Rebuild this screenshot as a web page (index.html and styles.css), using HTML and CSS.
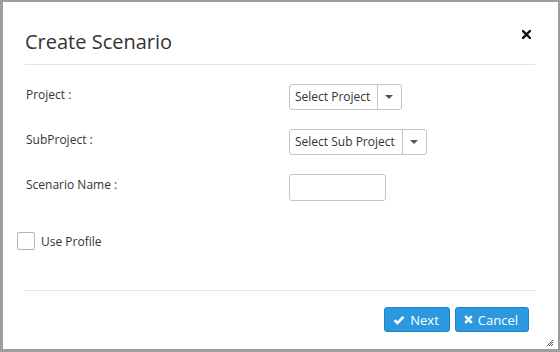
FILE: index.html
```html
<!DOCTYPE html>
<html lang="en">
<head>
    <meta charset="UTF-8">
    <meta name="viewport" content="width=device-width, initial-scale=1.0">
    <title>Create Scenario</title>
    <link rel="stylesheet" href="styles.css">
</head>
<body>
    <div class="dialog">
        <div class="dialog-header">
            <h2 class="dialog-title">Create Scenario</h2>
            <button class="close" aria-label="Close">
                <svg width="9" height="9" viewBox="0 0 9 9"><path d="M1 1L8 8M8 1L1 8" stroke="#111" stroke-width="2.4" stroke-linecap="square"/></svg>
            </button>
        </div>

        <div class="dialog-body">
            <div class="form-grid">
                <label class="field-label">Project :</label>
                <div class="dropdown">
                    <span class="dropdown-text">Select Project</span>
                    <span class="dropdown-caret"></span>
                </div>

                <label class="field-label">SubProject :</label>
                <div class="dropdown">
                    <span class="dropdown-text">Select Sub Project</span>
                    <span class="dropdown-caret"></span>
                </div>

                <label class="field-label" for="scenario-name">Scenario Name :</label>
                <div><input type="text" id="scenario-name" class="text-input"></div>
            </div>

            <label class="check-row">
                <span class="checkbox"></span>
                Use Profile
            </label>
        </div>

        <div class="dialog-footer">
            <button class="btn">
                <svg width="12" height="10" viewBox="0 0 12 10"><path d="M1.5 5.2L4.5 8L10.5 1.8" fill="none" stroke="#fff" stroke-width="2.6"/></svg>
                Next
            </button>
            <button class="btn">
                <svg width="9" height="9" viewBox="0 0 9 9"><path d="M1.2 1.2L7.8 7.8M7.8 1.2L1.2 7.8" stroke="#fff" stroke-width="2.4"/></svg>
                Cancel
            </button>
        </div>

        <!-- resize grip sits over the corner -->
        <svg class="grip" width="8" height="8" viewBox="0 0 8 8">
            <path d="M7 1L1 7M7 3L3 7M7 5L5 7" stroke="#555" stroke-width="1"/>
        </svg>
    </div>
</body>
</html>
```

FILE: styles.css
```css
body {
    margin: 0;
    font-family: "Open Sans", Arial, sans-serif;
    color: #333;
    background: #fff;
}
.dialog {
    position: relative;
    box-sizing: border-box;
    width: 560px;
    height: 352px;
    border: 2px solid #9e9e9e;
    border-left-width: 3px;
    border-bottom-width: 3px;
    background: #fff;
    padding: 0 23px 0 22px;
}
.dialog-header {
    display: flex;
    align-items: flex-start;
    justify-content: space-between;
    padding: 26px 0 8px;
    border-bottom: 1px solid #e5e5e5;
}
.dialog-title {
    margin: 0;
    font-size: 20px;
    font-weight: normal;
    line-height: 28px;
    color: #333;
}
.close {
    border: none;
    background: none;
    padding: 0;
    margin: -1px 4px 0 0;
    cursor: pointer;
}
.dialog-body {
    padding: 19px 0 40px;
}
.form-grid {
    display: grid;
    grid-template-columns: 264px auto;
    row-gap: 19px;
}
.field-label {
    font-size: 12px;
    padding: 2px 0 0 1px;
}
.dropdown {
    display: inline-flex;
    justify-self: start;
    height: 26px;
    box-sizing: border-box;
    border: 1px solid #c5c5c5;
    border-radius: 3px;
    font-size: 12px;
    color: #333;
}
.dropdown-text {
    padding: 0 7px 0 5px;
    line-height: 24px;
    border-right: 1px solid #c5c5c5;
}
.dropdown-caret {
    width: 23px;
    position: relative;
}
.dropdown-caret::after {
    content: "";
    position: absolute;
    left: 7px;
    top: 10px;
    border-left: 4px solid transparent;
    border-right: 4px solid transparent;
    border-top: 4px solid #555;
}
.text-input {
    display: block;
    width: 97px;
    height: 27px;
    box-sizing: border-box;
    border: 1px solid #c5c5c5;
    border-radius: 3px;
    padding: 0 5px;
    font-family: inherit;
    font-size: 12px;
}
.check-row {
    display: flex;
    align-items: center;
    gap: 6px;
    margin: 31px 0 0 -8px;
    font-size: 12px;
}
.checkbox {
    width: 16px;
    height: 16px;
    border: 1px solid #b5b5b5;
    border-radius: 2px;
    background: #fff;
}
.dialog-footer {
    display: flex;
    justify-content: flex-end;
    gap: 5px;
    padding: 16px 6px 0 0;
    border-top: 1px solid #e5e5e5;
}
.btn {
    display: inline-flex;
    align-items: center;
    gap: 5px;
    height: 25px;
    padding: 0 10px 0 8px;
    background-color: #2b99e0;
    color: white;
    border: 1px solid #1f82c6;
    border-radius: 3px;
    font-family: inherit;
    font-size: 13px;
    cursor: pointer;
}
.btn:hover {
    background-color: #1f86cc;
}
.grip {
    position: absolute;
    right: 4px;
    bottom: 2px;
}
```
